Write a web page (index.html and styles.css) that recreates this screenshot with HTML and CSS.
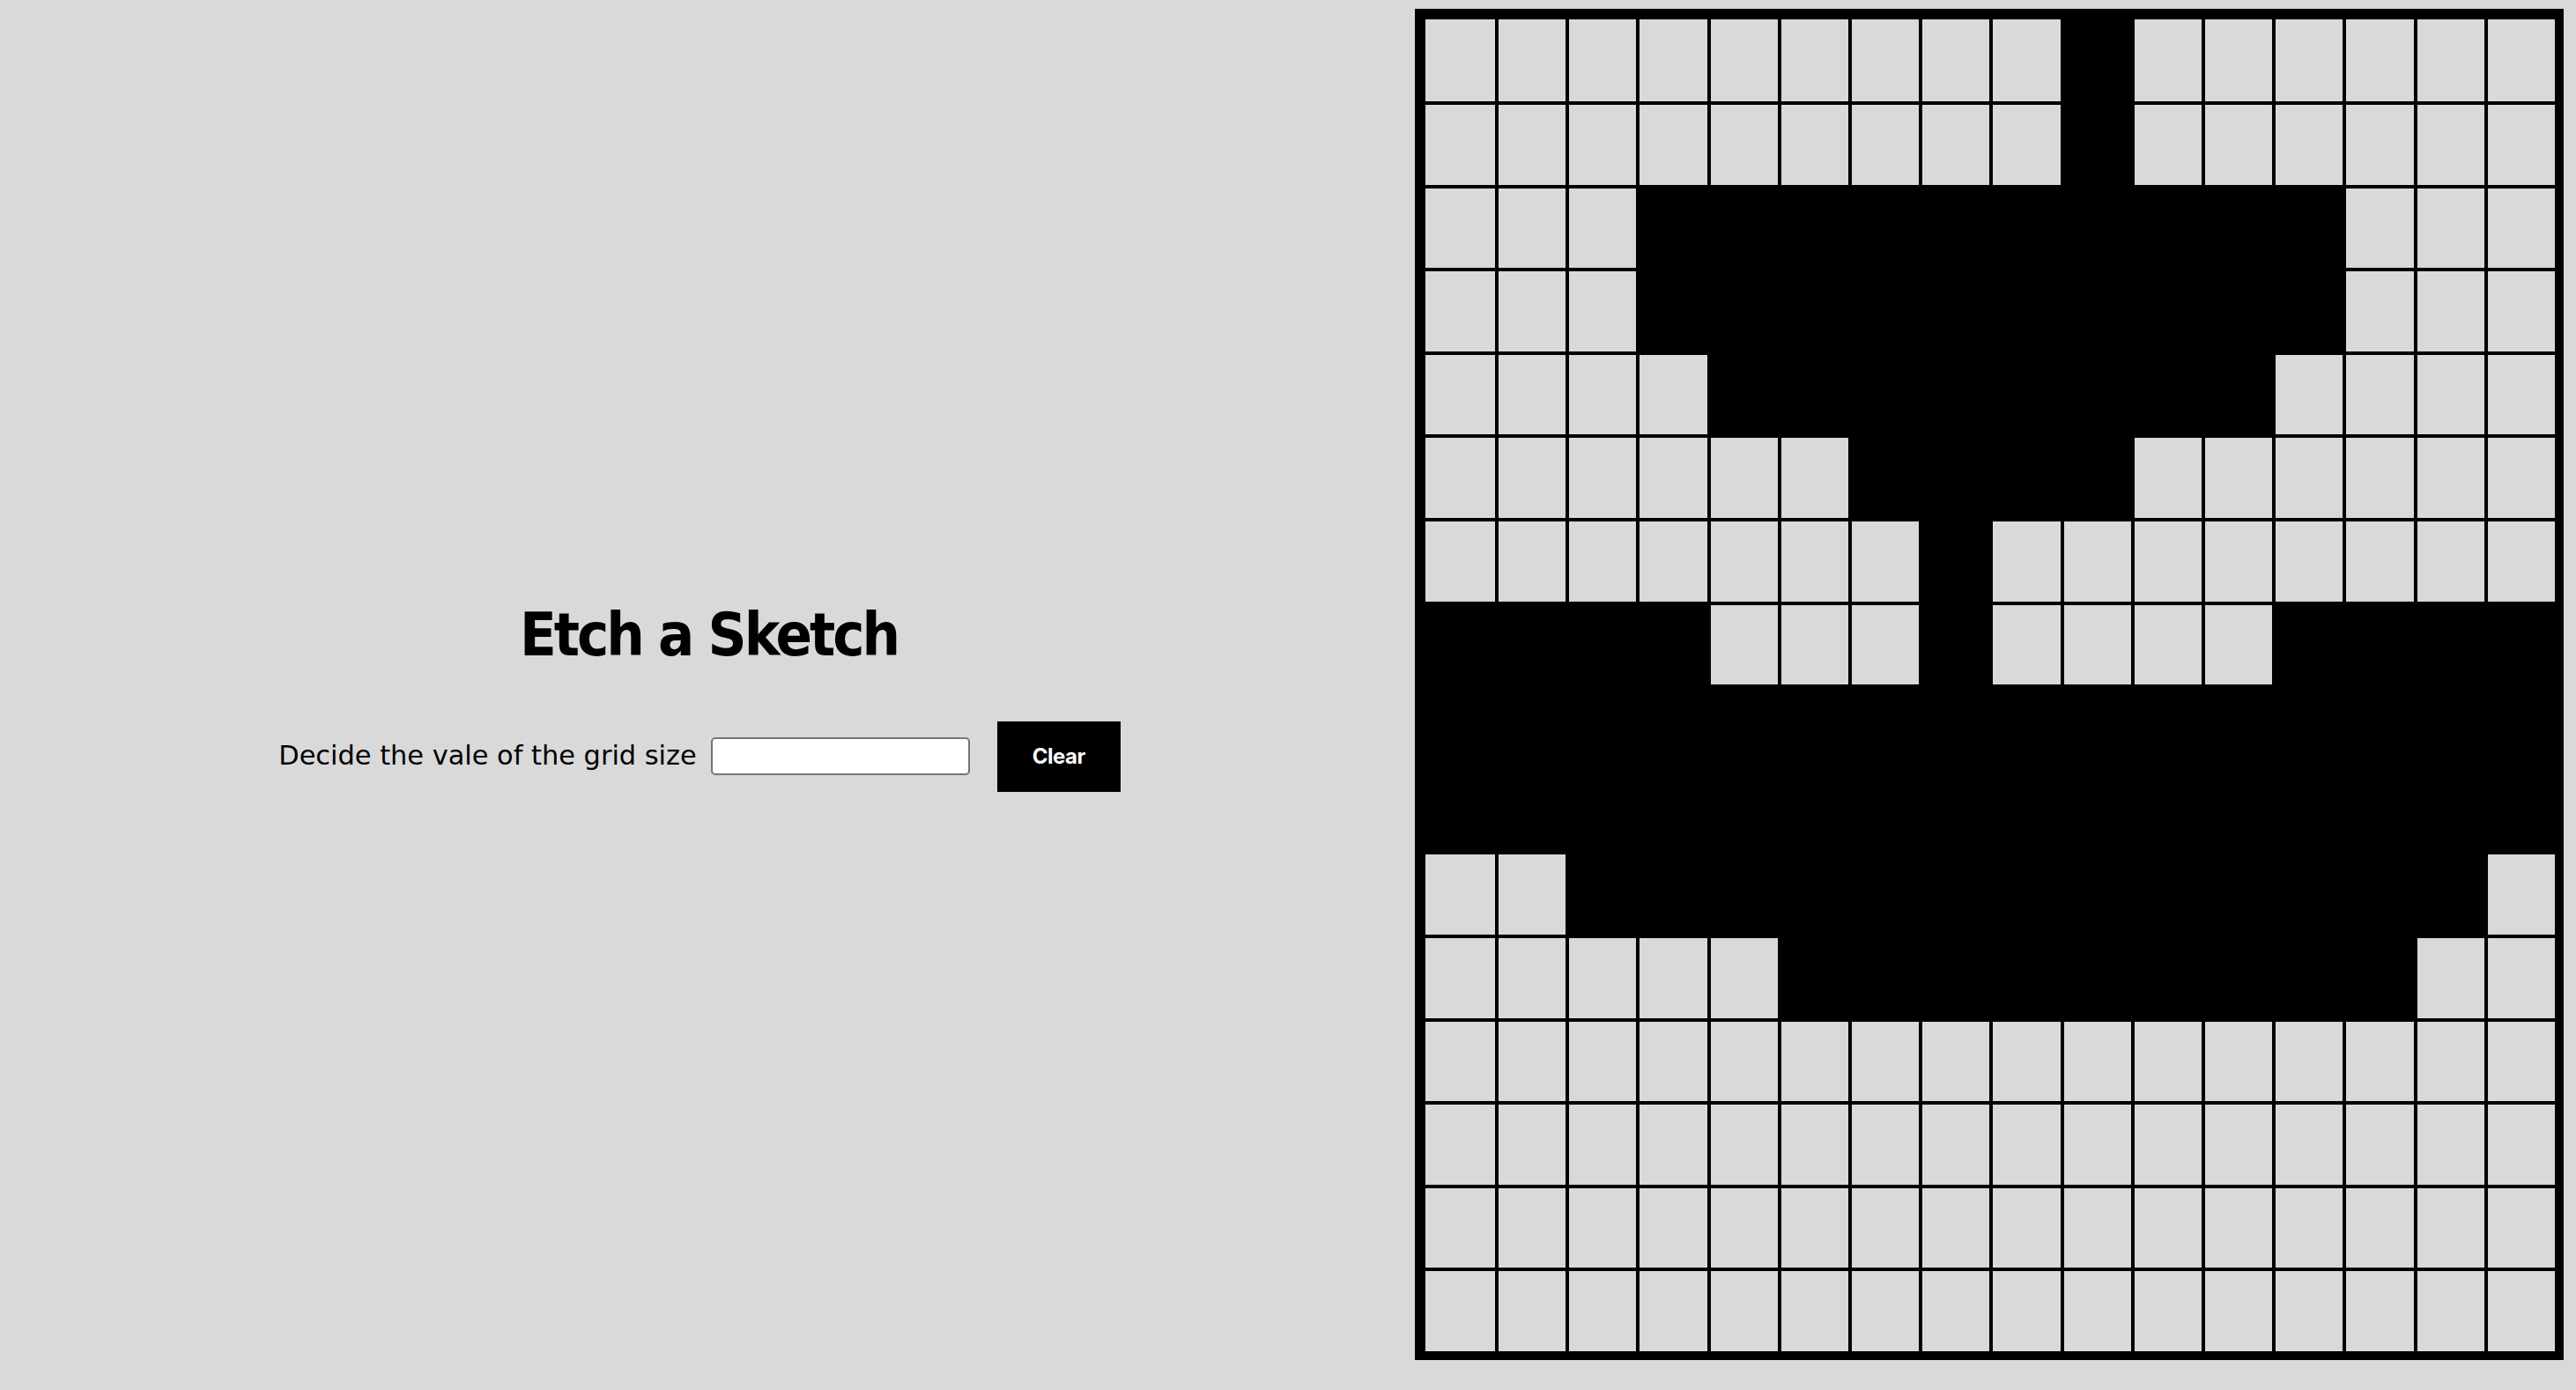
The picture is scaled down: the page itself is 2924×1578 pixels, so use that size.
FILE: index.html
```html
<!DOCTYPE html>
<html lang="en">
<head>
<meta charset="utf-8">
<title>Etch a Sketch</title>
<link rel="stylesheet" href="styles.css">
</head>
<body>
<div class="app">
  <section class="panel">
    <h1 class="title">Etch a Sketch</h1>
    <div class="controls">
      <label class="label" for="size">Decide the vale of the grid size</label>
      <input class="size-input" id="size" type="text">
      <button class="clear-btn" type="button">Clear</button>
    </div>
  </section>
  <div class="board">
    <!-- row 0 -->
    <div class="cell"></div><div class="cell"></div><div class="cell"></div><div class="cell"></div><div class="cell"></div><div class="cell"></div><div class="cell"></div><div class="cell"></div><div class="cell"></div><div class="cell on"></div><div class="cell"></div><div class="cell"></div><div class="cell"></div><div class="cell"></div><div class="cell"></div><div class="cell"></div>
    <!-- row 1 -->
    <div class="cell"></div><div class="cell"></div><div class="cell"></div><div class="cell"></div><div class="cell"></div><div class="cell"></div><div class="cell"></div><div class="cell"></div><div class="cell"></div><div class="cell on"></div><div class="cell"></div><div class="cell"></div><div class="cell"></div><div class="cell"></div><div class="cell"></div><div class="cell"></div>
    <!-- row 2 -->
    <div class="cell"></div><div class="cell"></div><div class="cell"></div><div class="cell on"></div><div class="cell on"></div><div class="cell on"></div><div class="cell on"></div><div class="cell on"></div><div class="cell on"></div><div class="cell on"></div><div class="cell on"></div><div class="cell on"></div><div class="cell on"></div><div class="cell"></div><div class="cell"></div><div class="cell"></div>
    <!-- row 3 -->
    <div class="cell"></div><div class="cell"></div><div class="cell"></div><div class="cell on"></div><div class="cell on"></div><div class="cell on"></div><div class="cell on"></div><div class="cell on"></div><div class="cell on"></div><div class="cell on"></div><div class="cell on"></div><div class="cell on"></div><div class="cell on"></div><div class="cell"></div><div class="cell"></div><div class="cell"></div>
    <!-- row 4 -->
    <div class="cell"></div><div class="cell"></div><div class="cell"></div><div class="cell"></div><div class="cell on"></div><div class="cell on"></div><div class="cell on"></div><div class="cell on"></div><div class="cell on"></div><div class="cell on"></div><div class="cell on"></div><div class="cell on"></div><div class="cell"></div><div class="cell"></div><div class="cell"></div><div class="cell"></div>
    <!-- row 5 -->
    <div class="cell"></div><div class="cell"></div><div class="cell"></div><div class="cell"></div><div class="cell"></div><div class="cell"></div><div class="cell on"></div><div class="cell on"></div><div class="cell on"></div><div class="cell on"></div><div class="cell"></div><div class="cell"></div><div class="cell"></div><div class="cell"></div><div class="cell"></div><div class="cell"></div>
    <!-- row 6 -->
    <div class="cell"></div><div class="cell"></div><div class="cell"></div><div class="cell"></div><div class="cell"></div><div class="cell"></div><div class="cell"></div><div class="cell on"></div><div class="cell"></div><div class="cell"></div><div class="cell"></div><div class="cell"></div><div class="cell"></div><div class="cell"></div><div class="cell"></div><div class="cell"></div>
    <!-- row 7 -->
    <div class="cell on"></div><div class="cell on"></div><div class="cell on"></div><div class="cell on"></div><div class="cell"></div><div class="cell"></div><div class="cell"></div><div class="cell on"></div><div class="cell"></div><div class="cell"></div><div class="cell"></div><div class="cell"></div><div class="cell on"></div><div class="cell on"></div><div class="cell on"></div><div class="cell on"></div>
    <!-- row 8 -->
    <div class="cell on"></div><div class="cell on"></div><div class="cell on"></div><div class="cell on"></div><div class="cell on"></div><div class="cell on"></div><div class="cell on"></div><div class="cell on"></div><div class="cell on"></div><div class="cell on"></div><div class="cell on"></div><div class="cell on"></div><div class="cell on"></div><div class="cell on"></div><div class="cell on"></div><div class="cell on"></div>
    <!-- row 9 -->
    <div class="cell on"></div><div class="cell on"></div><div class="cell on"></div><div class="cell on"></div><div class="cell on"></div><div class="cell on"></div><div class="cell on"></div><div class="cell on"></div><div class="cell on"></div><div class="cell on"></div><div class="cell on"></div><div class="cell on"></div><div class="cell on"></div><div class="cell on"></div><div class="cell on"></div><div class="cell on"></div>
    <!-- row 10 -->
    <div class="cell"></div><div class="cell"></div><div class="cell on"></div><div class="cell on"></div><div class="cell on"></div><div class="cell on"></div><div class="cell on"></div><div class="cell on"></div><div class="cell on"></div><div class="cell on"></div><div class="cell on"></div><div class="cell on"></div><div class="cell on"></div><div class="cell on"></div><div class="cell on"></div><div class="cell"></div>
    <!-- row 11 -->
    <div class="cell"></div><div class="cell"></div><div class="cell"></div><div class="cell"></div><div class="cell"></div><div class="cell on"></div><div class="cell on"></div><div class="cell on"></div><div class="cell on"></div><div class="cell on"></div><div class="cell on"></div><div class="cell on"></div><div class="cell on"></div><div class="cell on"></div><div class="cell"></div><div class="cell"></div>
    <!-- row 12 -->
    <div class="cell"></div><div class="cell"></div><div class="cell"></div><div class="cell"></div><div class="cell"></div><div class="cell"></div><div class="cell"></div><div class="cell"></div><div class="cell"></div><div class="cell"></div><div class="cell"></div><div class="cell"></div><div class="cell"></div><div class="cell"></div><div class="cell"></div><div class="cell"></div>
    <!-- row 13 -->
    <div class="cell"></div><div class="cell"></div><div class="cell"></div><div class="cell"></div><div class="cell"></div><div class="cell"></div><div class="cell"></div><div class="cell"></div><div class="cell"></div><div class="cell"></div><div class="cell"></div><div class="cell"></div><div class="cell"></div><div class="cell"></div><div class="cell"></div><div class="cell"></div>
    <!-- row 14 -->
    <div class="cell"></div><div class="cell"></div><div class="cell"></div><div class="cell"></div><div class="cell"></div><div class="cell"></div><div class="cell"></div><div class="cell"></div><div class="cell"></div><div class="cell"></div><div class="cell"></div><div class="cell"></div><div class="cell"></div><div class="cell"></div><div class="cell"></div><div class="cell"></div>
    <!-- row 15 -->
    <div class="cell"></div><div class="cell"></div><div class="cell"></div><div class="cell"></div><div class="cell"></div><div class="cell"></div><div class="cell"></div><div class="cell"></div><div class="cell"></div><div class="cell"></div><div class="cell"></div><div class="cell"></div><div class="cell"></div><div class="cell"></div><div class="cell"></div><div class="cell"></div>
  </div>
</div>
</body>
</html>
```

FILE: styles.css
```css
* {
  box-sizing: border-box;
}

html, body {
  margin: 0;
  padding: 0;
  background: #d9d9d9;
}

body {
  font-family: "DejaVu Sans", "Liberation Sans", sans-serif;
  color: #000;
}

.app {
  display: flex;
  align-items: flex-start;
  height: 1578px;
  padding-right: 14px;
}

.panel {
  flex: 1;
  height: 100%;
  padding-top: 7px;
  display: flex;
  flex-direction: column;
  align-items: center;
  justify-content: center;
}

.title {
  margin: 0 0 64px 0;
  font-family: "DejaVu Sans Condensed", "DejaVu Sans", sans-serif;
  font-stretch: condensed;
  font-weight: 700;
  font-size: 68px;
  line-height: 68px;
  letter-spacing: -3px;
  padding-left: 3px;
}

.controls {
  display: flex;
  align-items: center;
  padding-right: 18px;
}

.label {
  font-size: 30.4px;
  line-height: 1.2;
}

.size-input {
  margin-left: 16px;
  width: 294px;
  height: 43px;
  border: 2px solid #767676;
  border-radius: 5px;
  background: #fff;
  padding: 0 6px;
  font-size: 26px;
}

.clear-btn {
  margin-left: 31px;
  width: 140px;
  height: 80px;
  border: none;
  background: #000;
  color: #fff;
  font-family: "Inter", "Lato", sans-serif;
  font-weight: 700;
  font-size: 24px;
  letter-spacing: -0.5px;
  padding: 0;
}

.board {
  margin-top: 10px;
  width: 1304px;
  height: 1534px;
  flex: none;
  background: #000;
  padding: 12px 10px 10px 12px;
  display: grid;
  grid-template-columns: 79px repeat(15, 1fr);
  grid-template-rows: 93px repeat(15, 1fr);
  gap: 4px;
}

.cell {
  background: #d9d9d9;
}

.cell.on {
  background: #000;
}
```
